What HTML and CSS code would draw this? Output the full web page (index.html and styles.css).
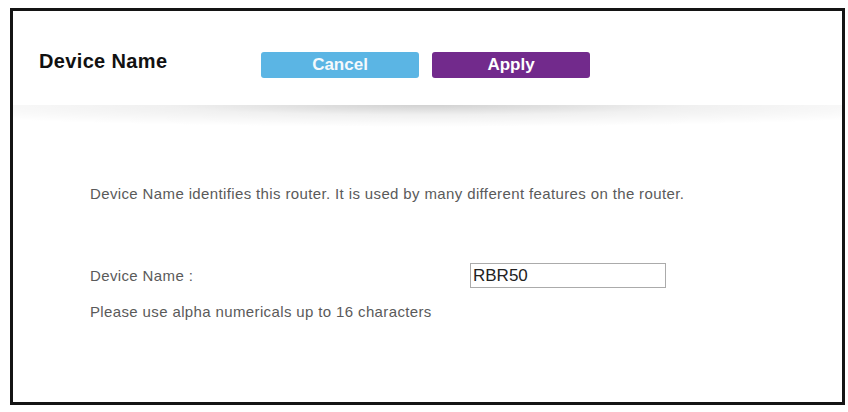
FILE: index.html
```html
<!DOCTYPE html>
<html>
<head>
<meta charset="utf-8">
<title>Device Name</title>
<link rel="stylesheet" href="styles.css">
</head>
<body>
<div class="frame">
  <div class="header">
    <h1 class="title">Device Name</h1>
    <div class="actions">
      <button class="btn btn-cancel">Cancel</button>
      <button class="btn btn-apply">Apply</button>
    </div>
  </div>
  <div class="header-shadow"></div>
  <div class="content">
    <p class="intro">Device Name identifies this router. It is used by many different features on the router.</p>
    <div class="field-row">
      <label class="field-label" for="devname">Device Name :</label>
      <input class="field-input" id="devname" type="text" value="RBR50">
    </div>
    <p class="hint">Please use alpha numericals up to 16 characters</p>
  </div>
</div>
</body>
</html>
```
FILE: styles.css
```css
html, body {
  margin: 0;
  padding: 0;
  background: #ffffff;
}
body {
  font-family: "Liberation Sans", Arial, sans-serif;
}
.frame {
  margin: 8px 0 0 10px;
  width: 829px;
  height: 391px;
  border: 3px solid #141414;
  background: #fff;
}
.header {
  height: 94px;
  box-sizing: border-box;
  padding: 41px 0 0 26px;
  display: flex;
  align-items: flex-start;
}
.title {
  margin: -3px 0 0 0;
  width: 222px;
  font-size: 20px;
  line-height: 24px;
  font-weight: bold;
  letter-spacing: 0.35px;
  color: #111;
}
.actions {
  display: flex;
  gap: 13px;
}
.btn {
  width: 158px;
  height: 26px;
  border: none;
  border-radius: 3px;
  color: #fff;
  font-family: "Liberation Sans", Arial, sans-serif;
  font-weight: bold;
  font-size: 17px;
  padding: 0;
}
.btn-cancel {
  background: #5bb5e4;
  color: #f4f9fc;
}
.btn-apply {
  background: #722a8c;
}
.header-shadow {
  height: 22px;
  background:
    radial-gradient(ellipse 70% 100% at 50% 0%, rgba(0,0,0,0.18), rgba(0,0,0,0.06) 45%, rgba(0,0,0,0) 100%);
}
.content {
  padding: 0 0 0 77px;
  color: #5a5a5a;
  font-size: 15px;
  letter-spacing: 0.37px;
}
.intro {
  margin: 58px 0 0 0;
  line-height: 18px;
}
.field-row {
  margin-top: 60px;
  display: flex;
  align-items: center;
  height: 25px;
}
.field-label {
  width: 380px;
}
.field-input {
  width: 196px;
  height: 25px;
  box-sizing: border-box;
  border: 1px solid #ababab;
  padding: 0 2px;
  font-family: "Liberation Sans", Arial, sans-serif;
  font-size: 17px;
  color: #222;
  outline: none;
}
.hint {
  margin: 15px 0 0 0;
  line-height: 18px;
}
```
